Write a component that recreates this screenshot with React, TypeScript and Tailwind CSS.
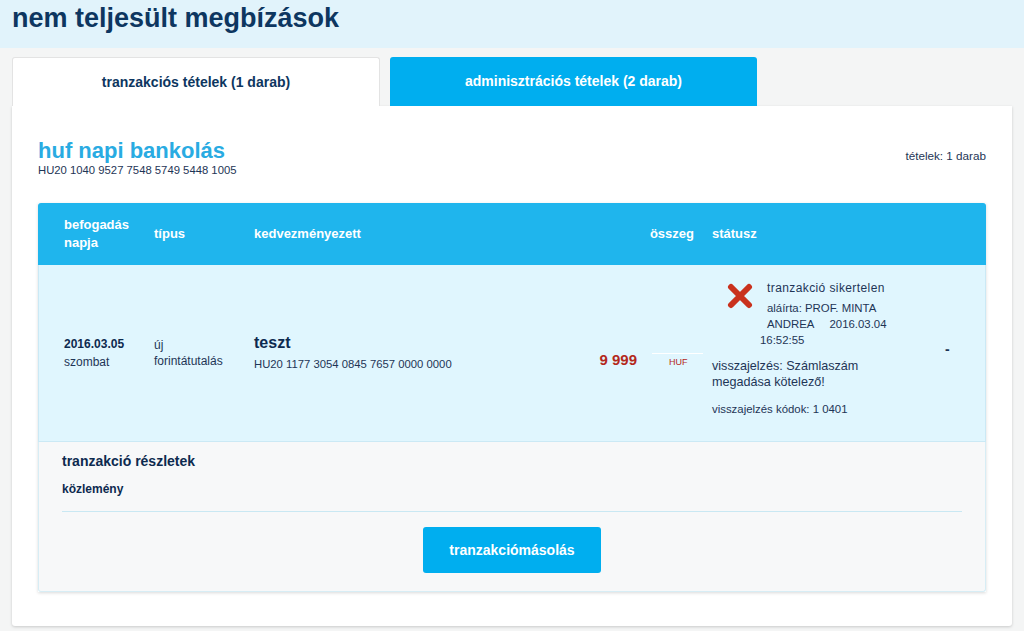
import React from 'react'

const font = { fontFamily: '"Liberation Sans", Arial, sans-serif' }

function FailIcon() {
  return (
    <svg width="26" height="26" viewBox="0 0 26 26" className="shrink-0">
      <path d="M4 4 L22 22 M22 4 L4 22" stroke="#c9311d" strokeWidth="6" strokeLinecap="round" />
    </svg>
  )
}

export default function App() {
  return (
    <div className="min-h-[631px] bg-[#f4f5f5] text-[#1e3556]" style={font}>
      <div className="h-[48px] bg-[#e1f3fb] pl-[12px] pt-[1px]">
        <h1 className="text-[27px] font-bold leading-[34px] text-[#0d3660]">nem teljesült megbízások</h1>
      </div>

      <div className="px-[12px] pt-[9px]">
        <div className="flex gap-[10px]">
          <div className="flex h-[49px] w-[368px] items-center justify-center rounded-t-[3px] border border-b-0 border-[#e3e3e3] bg-white text-[14px] font-bold text-[#0d3660]">
            tranzakciós tételek (1 darab)
          </div>
          <div className="flex h-[49px] w-[367px] items-center justify-center rounded-t-[3px] bg-[#00aeef] text-[14px] font-bold text-white">
            adminisztrációs tételek (2 darab)
          </div>
        </div>

        <div className="h-[520px] rounded-b-[3px] bg-white px-[26px] pt-[33px] shadow-[0_1px_3px_rgba(0,0,0,0.18)]">
          <div className="flex items-start justify-between">
            <div>
              <div className="text-[22px] font-bold leading-[24px] text-[#29abe2]">huf napi bankolás</div>
              <div className="text-[11.3px] leading-[15px] text-[#1e3556]">HU20 1040 9527 7548 5749 5448 1005</div>
            </div>
            <div className="pt-[8px] text-[11.7px] text-[#1e3556]">tételek: 1 darab</div>
          </div>

          <div className="mt-[25px] shadow-[0_1px_3px_rgba(0,0,0,0.15)]">
            <div className="flex h-[62px] items-center rounded-t-[3px] bg-[#1fb5ed] pl-[26px] text-[13px] font-bold leading-[18px] text-white">
              <div className="w-[90px]">befogadás<br />napja</div>
              <div className="w-[100px]">típus</div>
              <div className="w-[330px]">kedvezményezett</div>
              <div className="w-[110px] text-right">összeg</div>
              <div className="ml-[18px]">státusz</div>
            </div>

            <div className="flex h-[177px] items-center border-x border-b border-[#cbe9f5] bg-[#e0f6fe] pb-[6px] pl-[25px]">
              <div className="w-[90px] pt-[4px]">
                <div className="text-[12px] font-bold leading-[18px] text-[#0d2a4f]">2016.03.05</div>
                <div className="mt-[1px] text-[12px] leading-[16px]">szombat</div>
              </div>
              <div className="w-[100px] pt-[6px] text-[12px] leading-[16px]">
                <div>új</div>
                <div>forintátutalás</div>
              </div>
              <div className="w-[330px] pt-[4px]">
                <div className="text-[16px] font-bold leading-[20px] text-[#0d2a4f]">teszt</div>
                <div className="mt-[3px] text-[11.3px] leading-[16px]">HU20 1177 3054 0845 7657 0000 0000</div>
              </div>
              <div className="flex w-[110px] items-center justify-end pt-[20px]">
                <span className="text-[15px] font-bold text-[#b3281b]">9 999</span>
                <span className="-mr-[9px] ml-[15px] w-[51px] border-t border-white pt-[2px] pl-[17px] text-[9px] leading-[12px] text-[#b3281b]">HUF</span>
              </div>
              <div className="ml-[18px] w-[220px] pb-[4px] text-[11.4px] leading-[16px]">
                <div className="flex">
                  <div className="ml-[15px] mr-[14px] pt-[3px]">
                    <FailIcon />
                  </div>
                  <div>
                    <div className="text-[12px] tracking-[0.4px]">tranzakció sikertelen</div>
                    <div className="mt-[4px]">aláírta: PROF. MINTA</div>
                    <div>ANDREA<span className="ml-[15px]">2016.03.04</span></div>
                  </div>
                </div>
                <div className="pl-[48px]">16:52:55</div>
                <div className="mt-[10px] text-[12.6px]">visszajelzés: Számlaszám<br />megadása kötelező!</div>
                <div className="mt-[11px]">visszajelzés kódok: 1 0401</div>
              </div>
              <div className="ml-[13px] pb-[2px] text-[14px] font-bold">-</div>
            </div>

            <div className="h-[150px] rounded-b-[3px] border-x border-b border-[#d7edf5] bg-[#f7f8f9] px-[23px] pt-[10px]">
              <div className="text-[14px] font-bold leading-[18px] text-[#0d2a4f]">tranzakció részletek</div>
              <div className="mt-[12px] text-[12px] font-bold leading-[14px] text-[#0d2a4f]">közlemény</div>
              <div className="mt-[15px] border-t border-[#c9e8f3]" />
              <div className="mt-[15px] flex justify-center">
                <button className="h-[46px] w-[178px] rounded-[3px] bg-[#00aeef] text-[14px] font-bold text-white">
                  tranzakciómásolás
                </button>
              </div>
            </div>
          </div>
        </div>
      </div>
    </div>
  )
}
